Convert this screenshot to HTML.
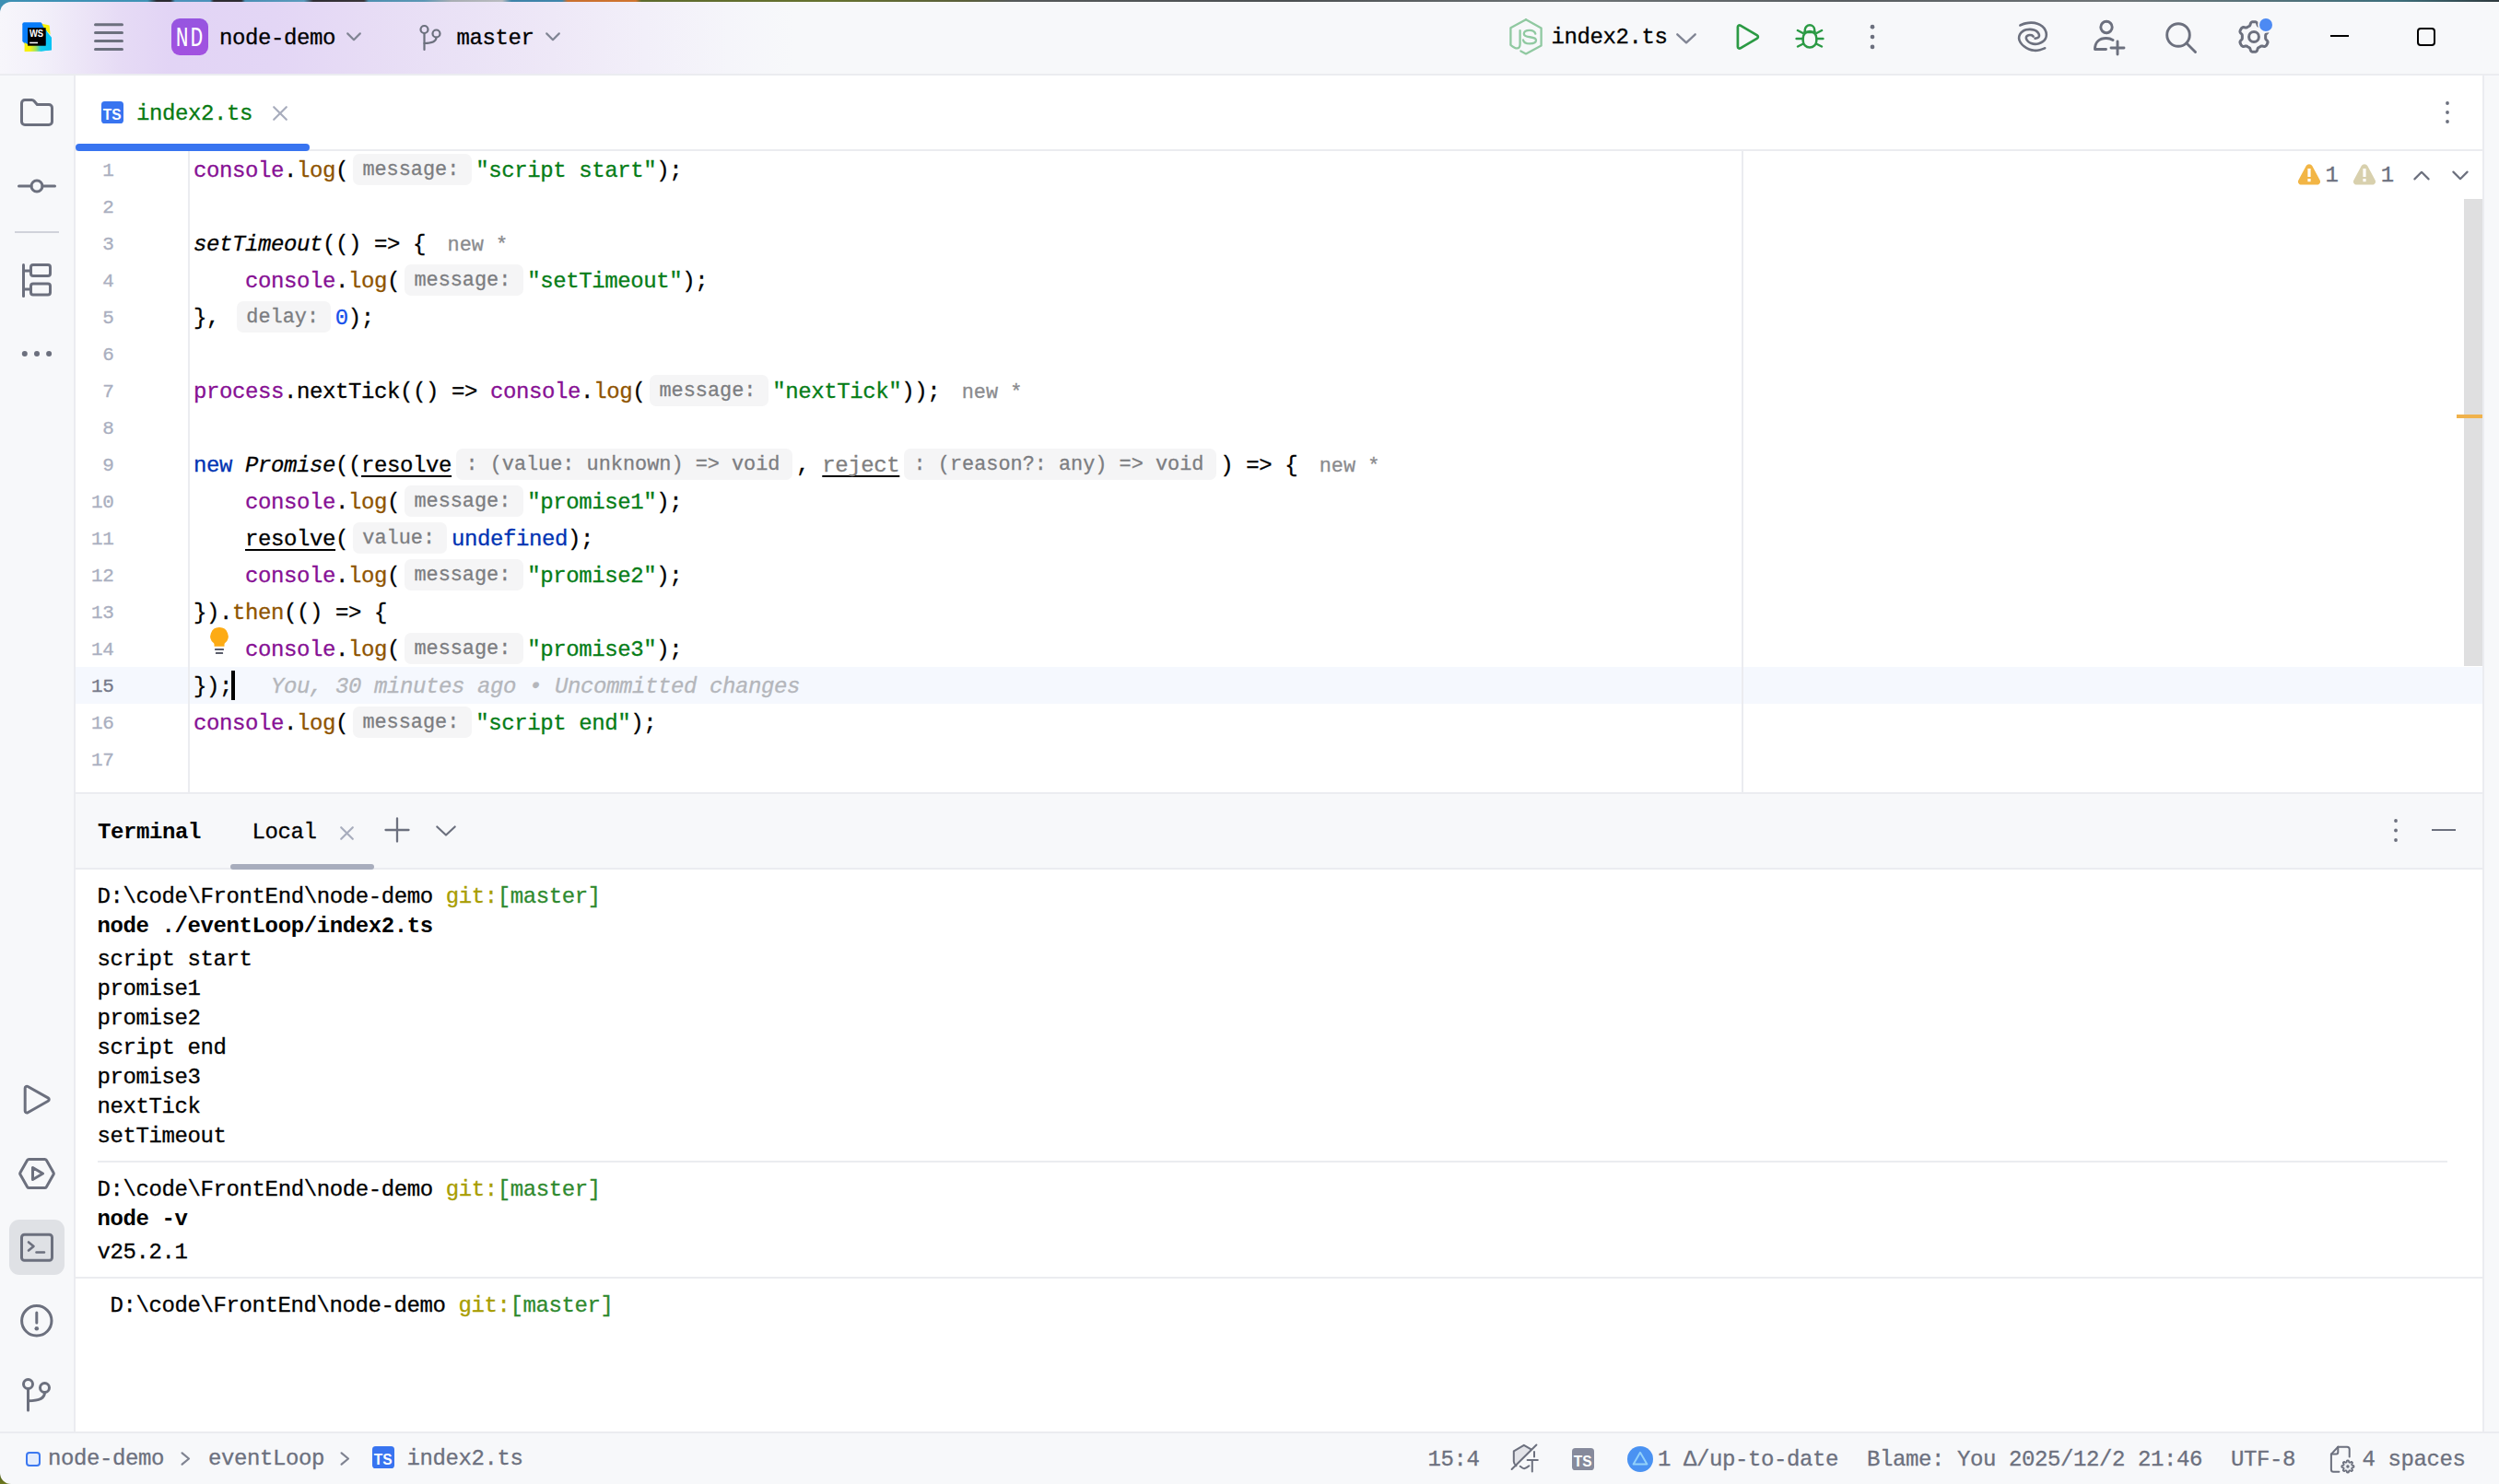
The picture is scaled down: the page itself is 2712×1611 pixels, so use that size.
<!DOCTYPE html>
<html>
<head>
<meta charset="utf-8">
<title>node-demo - index2.ts</title>
<style>
html,body{margin:0;padding:0;}
body{width:2712px;height:1611px;overflow:hidden;position:relative;background:#ffffff;font-family:"Liberation Mono",monospace;}
.abs{position:absolute;}
.t{position:absolute;font-family:"Liberation Mono",monospace;font-size:24px;letter-spacing:-0.4px;line-height:40px;white-space:pre;color:#000;}
.t,.tt,.st{-webkit-text-stroke:0.3px;}
.b{font-weight:bold;-webkit-text-stroke:0;}
svg{position:absolute;overflow:visible;}
.ic{fill:none;stroke:#6c707e;stroke-width:3;stroke-linecap:round;stroke-linejoin:round;}
/* editor */
#code{position:absolute;left:210px;top:165.6px;}
.ln{-webkit-text-stroke:0.3px;height:40px;line-height:40px;white-space:pre;font-size:24px;letter-spacing:-0.4px;color:#000;position:relative;}
.k{color:#0033b3;}
.p{color:#871094;}
.f{color:#8f5400;}
.s{color:#067d17;}
.n{color:#1750eb;}
.i{font-style:italic;}
.u{text-decoration:underline;text-decoration-skip-ink:none;text-decoration-thickness:2px;text-underline-offset:4px;text-decoration-color:#000;}
.g{color:#808080;}
.h{display:inline-block;vertical-align:top;position:relative;top:1.2px;height:34px;line-height:35px;margin:0 4.5px 0 5px;padding:0 13.3px 0 10.3px;background:#f5f5f6;border-radius:7px;color:#7c7d81;font-size:21.86px;letter-spacing:0;font-style:normal;}
.nw{color:#8a8b8e;font-size:21.86px;letter-spacing:0;margin-left:23.5px;font-style:normal;}
.bl{color:#b4b6bb;font-style:italic;}
#nums{position:absolute;left:82px;top:165.6px;width:41.5px;text-align:right;}
#nums div{-webkit-text-stroke:0.3px;height:40px;line-height:40px;font-size:21px;letter-spacing:-0.4px;color:#aaafc0;}
/* terminal */
.tt{position:absolute;left:105.6px;font-size:24px;letter-spacing:-0.4px;line-height:32px;white-space:pre;color:#000;}
.gy{color:#a89d00;}
.gg{color:#2f8a2f;}
.st{position:absolute;font-size:24px;letter-spacing:-0.4px;line-height:32px;white-space:pre;color:#6c707e;top:1566.4px;}
</style>
</head>
<body>
<!-- desktop strip -->
<div class="abs" id="wall" style="left:0;top:0;width:2712px;height:30px;background:linear-gradient(to right,#3d8fb3 0,#3f93b6 160px,#2b2a30 170px,#2b2a30 185px,#4b92bb 190px,#4b92bb 228px,#2e2b31 232px,#2e2b31 262px,#4a8fb5 266px,#5a9bbd 330px,#2f2d33 340px,#3a3538 395px,#4d8fb0 400px,#5b97b5 460px,#a9aeb3 490px,#b9bcc0 545px,#3d82a8 555px,#3f86ab 610px,#c9702f 616px,#d0742f 690px,#5d6a2d 696px,#66722f 900px,#5a5f3a 1050px,#55595a 1100px,#4c5052 1400px,#6e7476 1700px,#585d60 2000px,#6f7577 2300px,#3d6f7c 2600px,#2f3a3e 2712px);"></div>

<!-- TITLEBAR -->
<div class="abs" id="titlebar" style="left:0;top:2px;width:2712px;height:78px;border-top-left-radius:12px;background:linear-gradient(to right,#f7f6fb 0,#f3f1fa 40px,#ece5f7 90px,#e6dbf5 130px,#e2d4f5 185px,#e3d6f5 300px,#e7dcf5 400px,#eae2f6 500px,#eee8f7 600px,#f2eff9 700px,#f5f5fa 790px,#f7f8fa 860px,#f7f8fa 100%);"></div>
<div class="abs" style="left:0;top:80px;width:2712px;height:2px;background:#ebecf0;"></div>

<!-- LEFT STRIPE -->
<div class="abs" id="leftbar" style="left:0;top:82px;width:80px;height:1473px;background:#f7f8fa;"></div>
<div class="abs" style="left:80px;top:82px;width:2px;height:1473px;background:#ebecf0;"></div>
<!-- RIGHT STRIPE -->
<div class="abs" style="left:2696px;top:82px;width:16px;height:1473px;background:#f7f8fa;"></div>
<div class="abs" style="left:2694px;top:82px;width:2px;height:1473px;background:#ebecf0;"></div>

<!-- TAB BAR border -->
<div class="abs" style="left:82px;top:162px;width:2612px;height:2px;background:#ebecf0;"></div>

<!-- EDITOR -->
<div class="abs" id="curline" style="left:82px;top:724px;width:2612px;height:40px;background:#f5f8fe;"></div>
<div class="abs" style="left:204px;top:164px;width:1.5px;height:696px;background:#ebecf0;"></div>
<div class="abs" style="left:1890px;top:164px;width:1.5px;height:696px;background:#ebecf0;"></div>
<div class="abs" style="left:82px;top:860px;width:2612px;height:2px;background:#ebecf0;"></div>

<!-- TERMINAL HEADER -->
<div class="abs" style="left:82px;top:862px;width:2612px;height:80px;background:#f7f8fa;"></div>
<div class="abs" style="left:82px;top:942px;width:2612px;height:2px;background:#ebecf0;"></div>

<!-- STATUS BAR -->
<div class="abs" style="left:0;top:1554px;width:2712px;height:2px;background:#ebecf0;"></div>
<div class="abs" style="left:0;top:1595px;width:16px;height:16px;background:linear-gradient(to bottom,#3f4f1c,#6f7a1f);"></div>
<div class="abs" id="statusbar" style="left:0;top:1556px;width:2712px;height:55px;background:#f7f8fa;border-bottom-left-radius:12px;"></div>

<!-- WS logo -->
<svg style="left:24px;top:24px" width="32" height="32" viewBox="0 0 32 32">
<defs><linearGradient id="wsg" x1="0" y1="0" x2="1" y2="0"><stop offset="0.2" stop-color="#f6f00a"/><stop offset="0.42" stop-color="#9fe45a"/><stop offset="0.6" stop-color="#19cdea"/><stop offset="1" stop-color="#05c1f5"/></linearGradient></defs>
<path d="M0.300 2.300Q0.300 0.300 2.300 0.300H20.300L27 7V27H6L0.300 20.800z" fill="#087cfa"/>
<polygon points="21.500,1.800 29.600,3.400 30.600,13.500 24,7" fill="#f6f00a"/>
<polygon points="25.500,8.600 32,16.800 32,30.200 20,31.500 20,26 26,26" fill="#09c3f4"/>
<polygon points="2.600,22 2.600,32 20,31.700 32,30.200 32,24 6,24" fill="url(#wsg)"/>
<rect x="6.100" y="6.200" width="19.600" height="19.500" fill="#000"/>
<text x="7.900" y="16.100" font-family="Liberation Sans,sans-serif" font-weight="bold" font-size="10.600" textLength="15.200" lengthAdjust="spacingAndGlyphs" fill="#fff">WS</text>
<rect x="8.200" y="21.700" width="8.800" height="1.500" fill="#fff"/>
</svg>
<!-- hamburger -->
<svg style="left:102px;top:24px" width="32" height="32" viewBox="0 0 32 32"><g stroke="#6c707e" stroke-width="3" stroke-linecap="round"><line x1="1.5" y1="2.7" x2="30.5" y2="2.7"/><line x1="1.5" y1="11.6" x2="30.5" y2="11.6"/><line x1="1.5" y1="20.5" x2="30.5" y2="20.5"/><line x1="1.5" y1="29.4" x2="30.5" y2="29.4"/></g></svg>
<!-- project badge -->
<div class="abs" style="left:186px;top:20px;width:40px;height:40px;border-radius:9px;background:linear-gradient(180deg,#9655e0,#a251e0);"></div>
<svg style="left:186px;top:20px" width="40" height="40" viewBox="0 0 40 40"><g fill="#fff" font-family="Liberation Mono,monospace" font-size="28.800"><text transform="translate(4.700,29.700) scale(0.80,1)">N</text><text transform="translate(20.500,29.700) scale(0.80,1)">D</text></g></svg>
<div class="t" id="t_proj" style="left:238px;top:21.7px;">node-demo</div>
<svg style="left:376px;top:35px" width="16" height="10" viewBox="0 0 16 10"><polyline points="1.2,1.4 8,8.2 14.8,1.4" fill="none" stroke="#818594" stroke-width="2.2" stroke-linecap="round" stroke-linejoin="round"/></svg>
<!-- branch icon -->
<svg style="left:454px;top:26px" width="26" height="30" viewBox="0 0 26 30"><g fill="none" stroke="#6c707e" stroke-width="2.2" stroke-linecap="round"><circle cx="6.5" cy="6" r="4"/><circle cx="19.5" cy="10.5" r="4"/><path d="M6.5 10.2V28"/><path d="M19.5 14.6c0 5-5 6.4-13 6.4"/></g></svg>
<div class="t" id="t_branch" style="left:495.5px;top:21.5px;">master</div>
<svg style="left:592px;top:35px" width="16" height="10" viewBox="0 0 16 10"><polyline points="1.2,1.4 8,8.2 14.8,1.4" fill="none" stroke="#818594" stroke-width="2.2" stroke-linecap="round" stroke-linejoin="round"/></svg>
<!-- node run config -->
<svg style="left:1637px;top:19px" width="38" height="42" viewBox="0 0 38 42"><g fill="none" stroke="#90c9a1" stroke-width="2.300" stroke-linejoin="round" stroke-linecap="round"><path d="M19 2.300 35.600 11.500V30.400L19 39.400 13.400 36.400"/><path d="M19 2.300 2.400 11.300V29.800C4.500 31.500 7.500 33.600 9.800 33.400 11.800 33.200 12.600 31.400 12.600 28.500V14.200"/><path d="M29.300 17.600C28.500 15 26 13.800 23 13.800 19.500 13.800 16.800 15.300 16.800 17.800 16.800 23 30 19.500 30 24.600 30 27.300 27 28.400 23.200 28.400 19.500 28.400 16.600 27 16 24.400"/></g></svg>
<div class="t" id="t_run" style="left:1683.6px;top:21px;">index2.ts</div>
<svg style="left:1819px;top:36px" width="22" height="12" viewBox="0 0 22 12"><polyline points="1.3,1.3 11,10.3 20.700,1.3" fill="none" stroke="#818594" stroke-width="2.4" stroke-linecap="round" stroke-linejoin="round"/></svg>
<!-- play -->
<svg style="left:1882px;top:24px" width="30" height="32" viewBox="0 0 30 32"><path d="M3.900 5.300c0-1.500 1.500-2.300 2.800-1.600L25 14.400c1.200 .7 1.200 2.500 0 3.200L6.700 28.300c-1.300 .7-2.800-.1-2.800-1.600z" fill="none" stroke="#2b9a44" stroke-width="2.700" stroke-linejoin="round"/></svg>
<!-- bug -->
<svg style="left:1948px;top:24px" width="32" height="32" viewBox="0 0 32 32"><g fill="none" stroke="#2b9a44" stroke-width="2.500" stroke-linecap="round" stroke-linejoin="round"><path d="M8.700 17.400a7.300 7.400 0 0 1 14.600 0v2.800a7.300 7.400 0 0 1-14.600 0z"/><path d="M10.800 10.800V8.500a5.200 5.200 0 0 1 10.400 0v2.300"/><path d="M10.400 10.900h11.200"/><path d="M2.900 9 8.600 12M29.100 9 23.400 12M1.600 18h6.500M30.400 18h-6.500M3 26.500l6-3M29 26.500l-6-3"/></g></svg>
<!-- kebab -->
<svg style="left:2028px;top:26px" width="8" height="28" viewBox="0 0 8 28"><g fill="#6c707e"><circle cx="4" cy="3.2" r="2.350"/><circle cx="4" cy="14" r="2.350"/><circle cx="4" cy="24.900" r="2.350"/></g></svg>
<!-- AI spiral -->
<svg style="left:2188px;top:22px" width="36" height="36" viewBox="0 0 36 36"><g fill="none" stroke="#6c707e" stroke-width="2.600" stroke-linecap="round"><path d="M4.35 5.48C5.32 5.13 8.12 3.85 10.17 3.38C12.22 2.91 14.48 2.61 16.64 2.67C18.80 2.72 21.17 3.04 23.11 3.70C25.05 4.36 26.85 5.43 28.28 6.61C29.71 7.80 30.92 9.36 31.68 10.82C32.43 12.27 32.78 13.84 32.81 15.35C32.84 16.85 32.49 18.58 31.84 19.87C31.19 21.17 30.11 22.22 28.93 23.11C27.74 24.00 26.13 24.75 24.72 25.21C23.32 25.67 21.92 25.88 20.52 25.86C19.12 25.83 17.56 25.51 16.32 25.05C15.08 24.59 13.94 23.86 13.08 23.11C12.22 22.35 11.49 21.33 11.14 20.52C10.79 19.71 10.76 18.90 10.98 18.26C11.19 17.61 11.81 17.02 12.43 16.64C13.05 16.26 13.94 16.05 14.70 15.99C15.45 15.94 16.32 16.05 16.96 16.32C17.61 16.59 18.31 17.39 18.58 17.61"/><path d="M31.19 30.22C30.28 30.55 27.58 31.73 25.69 32.16C23.81 32.59 21.81 32.92 19.87 32.81C17.93 32.70 15.94 32.27 14.05 31.52C12.17 30.76 10.12 29.52 8.55 28.28C6.99 27.04 5.59 25.53 4.67 24.08C3.76 22.62 3.16 21.01 3.06 19.55C2.95 18.09 3.38 16.59 4.03 15.35C4.67 14.11 5.80 12.95 6.94 12.11C8.07 11.28 9.47 10.71 10.82 10.33C12.17 9.96 13.62 9.82 15.02 9.85C16.42 9.87 17.99 10.12 19.23 10.49C20.47 10.87 21.57 11.41 22.46 12.11C23.35 12.81 24.16 13.84 24.56 14.70C24.97 15.56 25.13 16.53 24.89 17.29C24.64 18.04 23.84 18.82 23.11 19.23C22.38 19.63 20.95 19.63 20.52 19.71"/></g></svg>
<!-- person plus -->
<svg style="left:2270px;top:21px" width="38" height="40" viewBox="0 0 38 40"><g fill="none" stroke="#6c707e" stroke-width="2.900" stroke-linecap="round" stroke-linejoin="round"><circle cx="16" cy="8.500" r="6.200"/><path d="M15.500 32.500H3.500c0-8 5-12 12-12 3 0 5.500 .8 7.500 2"/><path d="M28 24v14M21 31h14"/></g></svg>
<!-- search -->
<svg style="left:2349px;top:23px" width="36" height="36" viewBox="0 0 36 36"><g fill="none" stroke="#6c707e" stroke-width="2.900" stroke-linecap="round"><circle cx="15" cy="15" r="12.300"/><path d="M24 24l9.500 9.500"/></g></svg>
<!-- gear -->
<svg style="left:2427px;top:20px" width="38" height="40" viewBox="0 0 38 40"><g fill="none" stroke="#6c707e" stroke-width="3" stroke-linejoin="round"><path d="M31.65 20.00 31.65 19.45 31.64 18.89 31.66 18.33 31.79 17.75 32.20 17.07 33.01 16.25 33.76 15.35 34.05 14.52 34.00 13.79 33.79 13.11 33.50 12.45 33.16 11.83 32.78 11.22 32.36 10.64 31.88 10.12 31.27 9.70 30.41 9.54 29.25 9.75 28.14 10.03 27.34 10.06 26.77 9.87 26.28 9.61 25.80 9.32 25.33 9.04 24.84 8.77 24.36 8.50 23.89 8.21 23.44 7.80 23.07 7.10 22.75 5.99 22.35 4.89 21.78 4.23 21.12 3.90 20.42 3.75 19.71 3.67 19.00 3.65 18.29 3.67 17.58 3.75 16.88 3.90 16.22 4.23 15.65 4.89 15.25 5.99 14.93 7.10 14.56 7.80 14.11 8.21 13.64 8.50 13.16 8.77 12.68 9.04 12.20 9.32 11.72 9.61 11.23 9.87 10.66 10.06 9.86 10.03 8.75 9.75 7.59 9.54 6.73 9.70 6.12 10.12 5.64 10.64 5.22 11.22 4.84 11.82 4.50 12.45 4.21 13.11 4.00 13.79 3.95 14.52 4.24 15.35 4.99 16.25 5.80 17.07 6.21 17.75 6.34 18.33 6.36 18.89 6.35 19.45 6.35 20.00 6.35 20.55 6.36 21.11 6.34 21.67 6.21 22.25 5.80 22.93 4.99 23.75 4.24 24.65 3.95 25.48 4.00 26.21 4.21 26.89 4.50 27.55 4.84 28.18 5.22 28.78 5.64 29.36 6.12 29.88 6.73 30.30 7.59 30.46 8.75 30.25 9.86 29.97 10.66 29.94 11.23 30.13 11.72 30.39 12.20 30.68 12.67 30.96 13.16 31.23 13.64 31.50 14.11 31.79 14.56 32.20 14.93 32.90 15.25 34.01 15.65 35.11 16.22 35.77 16.88 36.10 17.58 36.25 18.29 36.33 19.00 36.35 19.71 36.33 20.42 36.25 21.12 36.10 21.78 35.77 22.35 35.11 22.75 34.01 23.07 32.90 23.44 32.20 23.89 31.79 24.36 31.50 24.84 31.23 25.32 30.96 25.80 30.68 26.28 30.39 26.77 30.13 27.34 29.94 28.14 29.97 29.25 30.25 30.41 30.46 31.27 30.30 31.88 29.88 32.36 29.36 32.78 28.78 33.16 28.17 33.50 27.55 33.79 26.89 34.00 26.21 34.05 25.48 33.76 24.65 33.01 23.75 32.20 22.93 31.79 22.25 31.66 21.67 31.64 21.11 31.65 20.55z"/><circle cx="19" cy="20" r="5.400"/></g></svg>
<div class="abs" style="left:2451.800px;top:19.700px;width:14.200px;height:14.200px;border-radius:50%;background:#4d8af3;box-shadow:0 0 0 1.800px #f7f8fa;"></div>
<!-- window controls -->
<div class="abs" style="left:2529px;top:37.500px;width:20px;height:2.600px;background:#000;"></div>
<div class="abs" style="left:2623px;top:30.300px;width:20px;height:19.400px;box-sizing:border-box;border:2.600px solid #000;border-radius:4px;"></div>

<!-- folder -->
<svg style="left:20px;top:105px" width="40" height="34" viewBox="0 0 40 34"><path class="ic" d="M3.500 7c0-2 1.500-3.500 3.500-3.500h7.500c1 0 1.800 .4 2.400 1.100l3.400 3.900H33c2 0 3.500 1.500 3.500 3.500v15c0 2-1.500 3.500-3.500 3.500H7c-2 0-3.500-1.500-3.500-3.500z"/></svg>
<!-- commit -->
<svg style="left:18px;top:192px" width="44" height="20" viewBox="0 0 44 20"><g class="ic"><circle cx="22" cy="10" r="6"/><path d="M2.500 10H16M28 10h13.500"/></g></svg>
<div class="abs" style="left:16px;top:251.400px;width:48px;height:2px;background:#d0d2da;"></div>
<!-- structure -->
<svg style="left:22px;top:284px" width="36" height="40" viewBox="0 0 36 40"><g class="ic"><path d="M3.500 3.500v34"/><path d="M3.500 10h7M3.500 30h7"/><rect x="11.500" y="3.500" width="21" height="12" rx="2.500"/><rect x="11.500" y="24" width="21" height="12" rx="2.500"/></g></svg>
<svg style="left:22px;top:379px" width="36" height="10" viewBox="0 0 36 10"><g fill="#6c707e"><circle cx="4.800" cy="5" r="3"/><circle cx="18" cy="5" r="3"/><circle cx="31.100" cy="5" r="3"/></g></svg>
<!-- run -->
<svg style="left:23px;top:1176px" width="34" height="36" viewBox="0 0 34 36"><path class="ic" d="M4.200 5.200c0-1.600 1.600-2.500 3-1.700l22 12.400c1.400 .8 1.400 2.600 0 3.400l-22 12.400c-1.400 .8-3-.1-3-1.700z"/></svg>
<!-- services -->
<svg style="left:19px;top:1256px" width="42" height="36" viewBox="0 0 42 36"><g class="ic"><path d="M12.500 2.500h17c.8 0 1.500 .4 1.900 1.100l7.600 13.300c.4 .7 .4 1.500 0 2.200l-7.600 13.300c-.4 .7-1.100 1.100-1.900 1.100h-17c-.8 0-1.500-.4-1.900-1.100L3 19.100c-.4-.7-.4-1.500 0-2.200l7.600-13.300c.4-.7 1.100-1.100 1.900-1.100z"/><path d="M16.500 11.500v13l11-6.500z"/></g></svg>
<!-- terminal (selected) -->
<div class="abs" style="left:10.200px;top:1324.200px;width:59.500px;height:59.500px;border-radius:11px;background:#dfe1e5;"></div>
<svg style="left:20px;top:1337px" width="40" height="34" viewBox="0 0 40 34"><g class="ic"><rect x="3.500" y="3.200" width="33" height="28" rx="3"/><path d="M11 11.500l5.500 4.500-5.500 4.500M19.500 22.500h8.500" stroke-width="2.600"/></g></svg>
<!-- problems -->
<svg style="left:20px;top:1414px" width="40" height="40" viewBox="0 0 40 40"><g class="ic"><circle cx="19.800" cy="19.800" r="16.200"/><path d="M19.800 11v11"/></g><circle cx="19.800" cy="28.200" r="2.300" fill="#6c707e"/></svg>
<!-- git -->
<svg style="left:22px;top:1494px" width="36" height="40" viewBox="0 0 36 40"><g class="ic"><circle cx="8.500" cy="8.500" r="5"/><circle cx="26.500" cy="12.500" r="5"/><path d="M8.500 13.800V37"/><path d="M26.500 17.800c0 7-8 9-18 9"/></g></svg>

<!-- tab -->
<svg style="left:110px;top:110px" width="24" height="24" viewBox="0 0 24 24"><rect width="24" height="24" rx="3.6" fill="#3874f0"/><text x="1.800" y="20" font-family="Liberation Sans,sans-serif" font-weight="bold" font-size="17" textLength="19.800" lengthAdjust="spacingAndGlyphs" fill="#fff">TS</text></svg>
<div class="t" id="t_tab" style="left:148px;top:103.800px;color:#087a12;">index2.ts</div>
<svg style="left:296px;top:114.500px" width="16" height="16" viewBox="0 0 16 16"><path d="M1.200 1.200l13.600 13.600M14.800 1.200 1.200 14.800" stroke="#a8adbd" stroke-width="2.200" stroke-linecap="round"/></svg>
<div class="abs" style="left:82px;top:156px;width:254px;height:8px;border-radius:4px;background:#3874f0;"></div>
<svg style="left:2652px;top:108px" width="8" height="28" viewBox="0 0 8 28"><g fill="#6c707e"><circle cx="4" cy="4" r="1.900"/><circle cx="4" cy="14" r="1.900"/><circle cx="4" cy="24" r="1.900"/></g></svg>

<div id="nums"><div>1</div><div>2</div><div>3</div><div>4</div><div>5</div><div>6</div><div>7</div><div>8</div><div>9</div><div>10</div><div>11</div><div>12</div><div>13</div><div>14</div><div style="color:#767a8a">15</div><div>16</div><div>17</div></div>
<div id="code">
<div class="ln"><span class="p">console</span>.<span class="f">log</span>(<span class="h">message:</span><span class="s">"script start"</span>);</div>
<div class="ln"></div>
<div class="ln"><span class="i">setTimeout</span>(() =&gt; {<span class="nw">new *</span></div>
<div class="ln">    <span class="p">console</span>.<span class="f">log</span>(<span class="h">message:</span><span class="s">"setTimeout"</span>);</div>
<div class="ln">}, <span class="h">delay:</span><span class="n">0</span>);</div>
<div class="ln"></div>
<div class="ln"><span class="p">process</span>.nextTick(() =&gt; <span class="p">console</span>.<span class="f">log</span>(<span class="h">message:</span><span class="s">"nextTick"</span>));<span class="nw">new *</span></div>
<div class="ln"></div>
<div class="ln"><span class="k">new</span> <span class="i">Promise</span>((<span class="u">resolve</span><span class="h">: (value: unknown) =&gt; void</span>, <span class="u g">reject</span><span class="h">: (reason?: any) =&gt; void</span>) =&gt; {<span class="nw">new *</span></div>
<div class="ln">    <span class="p">console</span>.<span class="f">log</span>(<span class="h">message:</span><span class="s">"promise1"</span>);</div>
<div class="ln">    <span class="u">resolve</span>(<span class="h">value:</span><span class="k">undefined</span>);</div>
<div class="ln">    <span class="p">console</span>.<span class="f">log</span>(<span class="h">message:</span><span class="s">"promise2"</span>);</div>
<div class="ln">}).<span class="f">then</span>(() =&gt; {</div>
<div class="ln">    <span class="p">console</span>.<span class="f">log</span>(<span class="h">message:</span><span class="s">"promise3"</span>);</div>
<div class="ln">});<span class="bl">   You, 30 minutes ago • Uncommitted changes</span></div>
<div class="ln"><span class="p">console</span>.<span class="f">log</span>(<span class="h">message:</span><span class="s">"script end"</span>);</div>
<div class="ln"></div>
</div>
<!-- caret -->
<div class="abs" style="left:251.200px;top:728px;width:3.600px;height:32px;background:#000;"></div>
<!-- bulb -->
<svg style="left:227px;top:680px" width="22" height="31" viewBox="0 0 22 31"><path d="M11 1.100a9.600 9.600 0 0 0-6.200 17c.5 .5 .7 1 .7 1.700v2h11v-2c0-.7 .2-1.200 .7-1.700A9.600 9.600 0 0 0 11 1.100z" fill="#fdab14"/><rect x="6" y="24" width="10" height="2" rx=".6" fill="#5a5d6b"/><rect x="6.900" y="28.100" width="8.200" height="1.900" rx=".6" fill="#5a5d6b"/></svg>
<!-- inspections widget -->
<svg style="left:2493px;top:176.500px" width="26" height="24" viewBox="0 0 26 24"><path d="M9.600 3.200c1.400-2.700 5.400-2.700 6.800 0l8.200 15.200c1.300 2.400-.4 5.100-3.100 5.100H4.500c-2.700 0-4.400-2.700-3.100-5.100z" fill="#f2b545"/><rect x="11.400" y="6" width="3.200" height="9" fill="#fff"/><rect x="11.400" y="17" width="3.200" height="3.200" fill="#fff"/></svg>
<div class="t" style="left:2523.600px;top:171.100px;color:#6c707e;">1</div>
<svg style="left:2553px;top:176.500px" width="26" height="24" viewBox="0 0 26 24"><path d="M9.600 3.200c1.400-2.700 5.400-2.700 6.800 0l8.200 15.200c1.300 2.400-.4 5.100-3.100 5.100H4.500c-2.700 0-4.400-2.700-3.100-5.100z" fill="#d8d0ad"/><rect x="11.400" y="6" width="3.200" height="9" fill="#fff"/><rect x="11.400" y="17" width="3.200" height="3.200" fill="#fff"/></svg>
<div class="t" style="left:2583.700px;top:171.100px;color:#6c707e;">1</div>
<svg style="left:2619px;top:184.500px" width="18" height="11" viewBox="0 0 18 11"><polyline points="1.400,9.400 9,1.800 16.600,9.400" fill="none" stroke="#6c707e" stroke-width="2.200" stroke-linecap="round" stroke-linejoin="round"/></svg>
<svg style="left:2661px;top:184.500px" width="18" height="11" viewBox="0 0 18 11"><polyline points="1.400,1.600 9,9.200 16.600,1.600" fill="none" stroke="#6c707e" stroke-width="2.200" stroke-linecap="round" stroke-linejoin="round"/></svg>
<!-- scrollbar -->
<div class="abs" style="left:2674px;top:216px;width:20px;height:507px;background:#dfdfe0;"></div>
<div class="abs" style="left:2666px;top:450px;width:28px;height:4px;background:#f0b24c;"></div>

<!-- terminal header -->
<div class="t b" id="t_term" style="left:106px;top:883.600px;">Terminal</div>
<div class="t" id="t_local" style="left:273.500px;top:883.600px;">Local</div>
<svg style="left:368.500px;top:897px" width="15" height="15" viewBox="0 0 15 15"><path d="M1.200 1.200l12.600 12.600M13.800 1.200 1.200 13.800" stroke="#a8adbd" stroke-width="2.200" stroke-linecap="round"/></svg>
<svg style="left:417px;top:887px" width="28" height="28" viewBox="0 0 28 28"><path d="M14 1.500v25M1.500 14h25" stroke="#6c707e" stroke-width="2.300" stroke-linecap="round"/></svg>
<svg style="left:473px;top:896px" width="22" height="12" viewBox="0 0 22 12"><polyline points="1.300,1.500 11,10.500 20.700,1.500" fill="none" stroke="#6c707e" stroke-width="2.200" stroke-linecap="round" stroke-linejoin="round"/></svg>
<div class="abs" style="left:250px;top:938px;width:156px;height:6px;border-radius:3px;background:#a8adbd;"></div>
<svg style="left:2596px;top:887px" width="8" height="28" viewBox="0 0 8 28"><g fill="#6c707e"><circle cx="4" cy="4" r="1.900"/><circle cx="4" cy="14.500" r="1.900"/><circle cx="4" cy="25" r="1.900"/></g></svg>
<div class="abs" style="left:2639px;top:900px;width:26px;height:2.200px;background:#6c707e;"></div>
<!-- terminal body -->
<div class="tt" style="top:957.8px;">D:\code\FrontEnd\node-demo <span class="gy">git:</span><span class="gg">[master]</span></div>
<div class="tt b" style="top:989.8px;">node ./eventLoop/index2.ts</div>
<div class="tt" style="top:1025.8px;">script start</div>
<div class="tt" style="top:1057.8px;">promise1</div>
<div class="tt" style="top:1089.8px;">promise2</div>
<div class="tt" style="top:1121.8px;">script end</div>
<div class="tt" style="top:1153.8px;">promise3</div>
<div class="tt" style="top:1185.8px;">nextTick</div>
<div class="tt" style="top:1217.8px;">setTimeout</div>
<div class="abs" style="left:106px;top:1260.400px;width:2550px;height:1.600px;background:#ebecf0;"></div>
<div class="tt" style="top:1275.5px;">D:\code\FrontEnd\node-demo <span class="gy">git:</span><span class="gg">[master]</span></div>
<div class="tt b" style="top:1307.5px;">node -v</div>
<div class="tt" style="top:1343.5px;">v25.2.1</div>
<div class="abs" style="left:82px;top:1386px;width:2612px;height:2px;background:#ebecf0;"></div>
<div class="tt" style="top:1401.5px;left:119.500px;">D:\code\FrontEnd\node-demo <span class="gy">git:</span><span class="gg">[master]</span></div>

<!-- status bar -->
<div class="abs" style="left:28px;top:1576.200px;width:16px;height:15.800px;box-sizing:border-box;border:2.200px solid #3c78f0;border-radius:4px;background:#e3ecfd;"></div>
<div class="st" id="s1" style="top:1568px;left:52px;">node-demo</div>
<svg style="left:196px;top:1576px" width="11" height="15" viewBox="0 0 11 15"><polyline points="1.600,1.300 9,7.500 1.600,13.700" fill="none" stroke="#7f8391" stroke-width="2.200" stroke-linecap="round" stroke-linejoin="round"/></svg>
<div class="st" id="s2" style="top:1568px;left:226px;">eventLoop</div>
<svg style="left:369px;top:1576px" width="11" height="15" viewBox="0 0 11 15"><polyline points="1.600,1.300 9,7.500 1.600,13.700" fill="none" stroke="#7f8391" stroke-width="2.200" stroke-linecap="round" stroke-linejoin="round"/></svg>
<svg style="left:404px;top:1570px" width="24" height="24" viewBox="0 0 24 24"><rect width="24" height="24" rx="3.6" fill="#3874f0"/><text x="1.800" y="20" font-family="Liberation Sans,sans-serif" font-weight="bold" font-size="17" textLength="19.800" lengthAdjust="spacingAndGlyphs" fill="#fff">TS</text></svg>
<div class="st" id="s3" style="top:1568px;left:441.500px;">index2.ts</div>
<div class="st" id="s4" style="top:1569.400px;left:1549.500px;">15:4</div>
<!-- shield icon -->
<svg style="left:1638px;top:1567px" width="34" height="32" viewBox="0 0 34 32"><path d="M15.800 1.800 23.700 6.500 7.200 24.200C5.600 22.800 4.800 21.200 4.800 19.800V8.300z" fill="#e3e4e9"/><g fill="none" stroke="#6c707e" stroke-width="2" stroke-linecap="round" stroke-linejoin="round"><path d="M23.200 6.200 15.800 1.800 4.800 8.300V19.600C4.800 21.400 5.800 23 7.400 24.300"/><path d="M2.600 28 29.400 1.500"/><path d="M11.700 24.800C14 26.600 15.400 27.400 16.200 27.200 17.600 27 19.500 26 21.400 24.300"/><path d="M19.600 18H30.800M24.800 18V30.500M27 9v5.400"/></g></svg>
<svg style="left:1706px;top:1572px" width="24" height="24" viewBox="0 0 24 24"><rect width="24" height="24" rx="3.6" fill="#868a9c"/><text x="1.800" y="20" font-family="Liberation Sans,sans-serif" font-weight="bold" font-size="17" textLength="19.800" lengthAdjust="spacingAndGlyphs" fill="#fff">TS</text></svg>
<svg style="left:1766px;top:1570px" width="28" height="28" viewBox="0 0 28 28"><circle cx="14" cy="14" r="14" fill="#4a92f2"/><path d="M14 6.800 21.400 19.500H6.600z" fill="none" stroke="#93d2fa" stroke-width="1.900" stroke-linejoin="round"/></svg>
<div class="st" id="s5" style="top:1569.400px;left:1799px;">1 Δ/up-to-date</div>
<div class="st" id="s6" style="top:1569.400px;left:2026px;">Blame: You 2025/12/2 21:46</div>
<div class="st" id="s7" style="top:1569.400px;left:2421px;">UTF-8</div>
<svg style="left:2528px;top:1568px" width="30" height="34" viewBox="0 0 30 34"><g fill="none" stroke="#6c707e" stroke-width="2" stroke-linecap="round" stroke-linejoin="round"><path d="M9.300 2.800H19.200C20.700 2.800 21.700 3.800 21.700 5.300V13.600"/><path d="M9.300 2.800 1.900 10.600V27.200C1.900 28.700 2.900 29.700 4.400 29.700H10.400"/><path d="M1.900 10.600H7.300C8.500 10.600 9.300 9.800 9.300 8.600V2.800"/><path d="M26.50 24.00 26.46 23.57 26.26 23.16 25.49 22.89 24.72 22.71 24.47 22.45 24.33 22.16 24.23 21.87 24.22 21.51 24.64 20.83 24.99 20.10 24.84 19.66 24.57 19.33 24.24 19.06 23.80 18.91 23.07 19.26 22.39 19.68 22.03 19.67 21.74 19.57 21.45 19.43 21.19 19.18 21.01 18.41 20.74 17.64 20.33 17.44 19.90 17.40 19.47 17.44 19.06 17.64 18.79 18.41 18.61 19.18 18.35 19.43 18.06 19.57 17.77 19.67 17.41 19.68 16.73 19.26 16.00 18.91 15.56 19.06 15.23 19.33 14.96 19.66 14.81 20.10 15.16 20.83 15.58 21.51 15.57 21.87 15.47 22.16 15.33 22.45 15.08 22.71 14.31 22.89 13.54 23.16 13.34 23.57 13.30 24.00 13.34 24.43 13.54 24.84 14.31 25.11 15.08 25.29 15.33 25.55 15.47 25.84 15.57 26.13 15.58 26.49 15.16 27.17 14.81 27.90 14.96 28.34 15.23 28.67 15.56 28.94 16.00 29.09 16.73 28.74 17.41 28.32 17.77 28.33 18.06 28.43 18.35 28.57 18.61 28.82 18.79 29.59 19.06 30.36 19.47 30.56 19.90 30.60 20.33 30.56 20.74 30.36 21.01 29.59 21.19 28.82 21.45 28.57 21.74 28.43 22.03 28.33 22.39 28.32 23.07 28.74 23.80 29.09 24.24 28.94 24.57 28.67 24.84 28.34 24.99 27.90 24.64 27.17 24.22 26.49 24.23 26.13 24.33 25.84 24.47 25.55 24.72 25.29 25.49 25.11 26.26 24.84 26.46 24.43z" fill="#eceef2" stroke-width="1.800"/></g><circle cx="19.900" cy="24" r="1.700" fill="#6c707e"/></svg>
<div class="st" id="s8" style="top:1569.400px;left:2563.500px;">4 spaces</div>

</body>
</html>
